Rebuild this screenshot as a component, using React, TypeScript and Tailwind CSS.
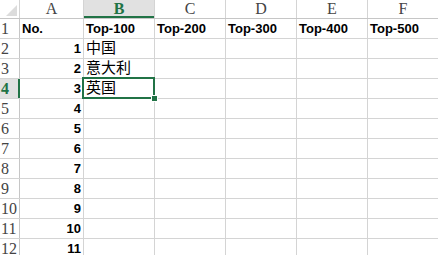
import React from 'react';

const cols = ['A', 'B', 'C', 'D', 'E', 'F'];
const widths = ['w-[64px]', 'w-[71px]', 'w-[71px]', 'w-[71px]', 'w-[71px]', 'w-[71px]'];

const rows: string[][] = [
  ['No.', 'Top-100', 'Top-200', 'Top-300', 'Top-400', 'Top-500'],
  ['1', '中国', '', '', '', ''],
  ['2', '意大利', '', '', '', ''],
  ['3', '英国', '', '', '', ''],
  ['4', '', '', '', '', ''],
  ['5', '', '', '', '', ''],
  ['6', '', '', '', '', ''],
  ['7', '', '', '', '', ''],
  ['8', '', '', '', '', ''],
  ['9', '', '', '', '', ''],
  ['10', '', '', '', '', ''],
  ['11', '', '', '', '', ''],
];

const headFont = "font-['Liberation_Serif',serif]";
const cellFont = "font-['Liberation_Sans','Noto_Sans_CJK_SC',sans-serif]";

export default function App() {
  return (
    <div className="relative h-[255px] w-[438px] overflow-hidden bg-white">
      {/* column headers */}
      <div className="flex h-[19px] border-b border-[#c6c6c6]">
        <div className="relative w-[20px] shrink-0 border-r border-[#d4d4d4]">
          <svg className="absolute right-[2px] bottom-[2px]" width="11" height="11">
            <polygon points="11,0 11,11 0,11" fill="#dcdcdc" />
          </svg>
        </div>
        {cols.map((c, i) => (
          <div
            key={c}
            className={`${widths[i]} shrink-0 border-r border-[#d4d4d4] flex items-center justify-center text-[16px] leading-none ${headFont} ${
              c === 'B' ? 'bg-[#e1e1e1] text-[#217346] font-bold shadow-[inset_0_-2px_0_#217346]' : 'text-[#444]'
            }`}
          >
            {c}
          </div>
        ))}
      </div>

      {rows.map((r, ri) => {
        const active = ri === 3;
        return (
          <div key={ri} className="flex h-[20px] border-b border-[#d4d4d4]">
            <div
              className={`w-[20px] shrink-0 border-r flex items-center pl-[1px] text-[16px] leading-none ${headFont} ${
                active
                  ? 'bg-[#e1e1e1] text-[#217346] font-bold border-[#217346] shadow-[inset_-1px_0_0_#217346]'
                  : 'border-[#c6c6c6] text-[#444]'
              }`}
            >
              {ri + 1}
            </div>
            {r.map((v, ci) => {
              const bold = ri === 0 || ci === 0;
              return (
                <div
                  key={ci}
                  className={`${widths[ci]} shrink-0 border-r border-[#d4d4d4] flex items-end pb-[2px] px-[2px] text-black ${cellFont} ${
                    ci === 0 && ri > 0 ? 'justify-end' : ''
                  } ${bold ? 'font-bold text-[13px] leading-[15px]' : 'text-[15px] leading-[17px]'}`}
                >
                  {v}
                </div>
              );
            })}
          </div>
        );
      })}

      {/* selection */}
      <div className="absolute left-[82px] top-[77px] h-[22px] w-[73px] border-2 border-[#217346]">
        <div className="absolute right-[-4px] bottom-[-4px] h-[5px] w-[5px] bg-[#217346] outline outline-1 outline-white" />
      </div>
    </div>
  );
}
